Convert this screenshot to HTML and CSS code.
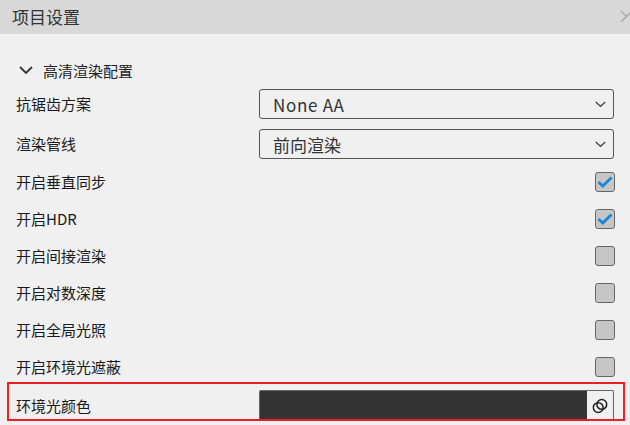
FILE: index.html
```html
<!DOCTYPE html>
<html lang="zh">
<head>
<meta charset="utf-8">
<title>项目设置</title>
<link rel="stylesheet" href="styles.css">
</head>
<body>
<div class="panel">
  <header class="titlebar">
    <span class="title">项目设置</span>
    <svg class="close" width="10" height="12" viewBox="0 0 10 12"><path d="M1 1l5.500 5.500M6.500 6.500L1 12M6.500 6.500L12 1" fill="none" stroke="#a8a8a8" stroke-width="1.300"/></svg>
  </header>
  <section class="content">
    <div class="section-head">
      <svg class="caret" width="14" height="9" viewBox="0 0 14 9"><path d="M1 1l6 6 6-6" fill="none" stroke="#333" stroke-width="1.800"/></svg>
      <span>高清渲染配置</span>
    </div>
    <div class="row row-select">
      <span class="label">抗锯齿方案</span>
      <div class="select"><span class="latin">None AA</span><svg width="11" height="7" viewBox="0 0 11 7"><path d="M.7.9l4.800 4.400L10.300.9" fill="none" stroke="#444" stroke-width="1.300"/></svg></div>
    </div>
    <div class="row row-select second">
      <span class="label">渲染管线</span>
      <div class="select"><span>前向渲染</span><svg width="11" height="7" viewBox="0 0 11 7"><path d="M.7.9l4.800 4.400L10.300.9" fill="none" stroke="#444" stroke-width="1.300"/></svg></div>
    </div>
    <div class="checks">
      <div class="row-check"><span class="label">开启垂直同步</span><span class="box"><svg width="16" height="12" viewBox="0 0 16 12"><path d="M1.500 6l4.300 4L14.500 1.500" fill="none" stroke="#1a86d8" stroke-width="2.800"/></svg></span></div>
      <div class="row-check"><span class="label">开启HDR</span><span class="box"><svg width="16" height="12" viewBox="0 0 16 12"><path d="M1.500 6l4.300 4L14.500 1.500" fill="none" stroke="#1a86d8" stroke-width="2.800"/></svg></span></div>
      <div class="row-check"><span class="label">开启间接渲染</span><span class="box"></span></div>
      <div class="row-check"><span class="label">开启对数深度</span><span class="box"></span></div>
      <div class="row-check"><span class="label">开启全局光照</span><span class="box"></span></div>
      <div class="row-check"><span class="label">开启环境光遮蔽</span><span class="box"></span></div>
    </div>
    <div class="row-color">
      <span class="label">环境光颜色</span>
      <div class="color">
        <div class="swatch"></div>
        <div class="link"><svg width="16" height="16" viewBox="0 0 16 16"><g fill="none" stroke="#222" stroke-width="1.500"><circle cx="6.200" cy="9.600" r="4.900"/><circle cx="9.800" cy="6.400" r="4.900"/></g></svg></div>
      </div>
    </div>
  </section>
</div>
</body>
</html>
```
FILE: styles.css
```css
* { box-sizing: border-box; }
html, body { margin: 0; height: 100%; overflow: hidden; }
body {
  background: #f0f0f0;
  color: #1a1a1a;
  font-family: "Noto Sans CJK SC", "Noto Sans", sans-serif;
  font-size: 15px;
}
.panel { width: 630px; height: 425px; overflow: hidden; }
.titlebar {
  height: 34px;
  background: #d8d8d8;
  padding-left: 12px;
  display: flex;
  align-items: center;
  justify-content: space-between;
  overflow: hidden;
}
.title { font-size: 17px; color: #333; line-height: 34px; }
.close { flex: none; margin-top: -2px; }
.content { padding: 23px 0 0 16px; }
.section-head {
  display: flex;
  align-items: center;
  height: 26px;
  padding-left: 3px;
  gap: 10px;
  color: #222;
  margin-bottom: 6px;
}
.caret { flex: none; }
.row, .row-check, .row-color { display: flex; align-items: center; }
.label { line-height: 20px; }
.row { height: 30px; padding-right: 16px; justify-content: space-between; }
.row.second { margin-top: 10px; }
.select {
  width: 355px;
  height: 30px;
  border: 1px solid #555;
  border-radius: 3px;
  display: flex;
  align-items: center;
  justify-content: space-between;
  padding: 0 7px 0 13px;
  font-size: 17px;
  color: #333;
}
.latin { letter-spacing: 0.7px; }
.checks { margin-top: 4px; }
.row-check {
  height: 37px;
  padding-right: 15px;
  justify-content: space-between;
}
.box {
  width: 20px;
  height: 20px;
  background: #c6c6c6;
  border: 1px solid #666;
  border-radius: 3px;
  display: flex;
  align-items: center;
  justify-content: center;
}
.row-color {
  margin: -3px 5px 0 -9px;
  height: 39px;
  border: 2px solid #ee1c25;
  padding: 6px 9px 0 7px;
  justify-content: space-between;
  align-items: flex-start;
}
.row-color .label { margin-top: 6px; }
.color {
  width: 355px;
  height: 29px;
  border: 1px solid #666;
  border-bottom: 0;
  border-radius: 2px 2px 0 0;
  display: flex;
}
.swatch { width: 327px; background: #333; }
.link { flex: 1; display: flex; align-items: center; justify-content: center; padding-top: 1px; }
```
